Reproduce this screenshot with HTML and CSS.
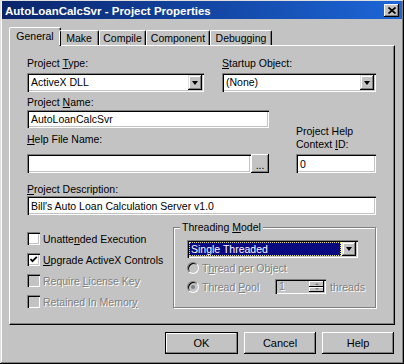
FILE: index.html
```html
<!DOCTYPE html>
<html lang="en">
<head>
	<meta charset="UTF-8">
	<title>AutoLoanCalcSvr - Project Properties</title>
	<link rel="stylesheet" href="styles.css">
</head>
<body>
	<div class="dialog">
		<div class="titlebar">
			<span class="title">AutoLoanCalcSvr - Project Properties</span>
			<a class="closeBtn"><svg width="8" height="7" viewBox="0 0 8 7"><path d="M0.5 0.5 L7.5 6.5 M7.5 0.5 L0.5 6.5" stroke="#000" stroke-width="1.7" fill="none"/></svg></a>
		</div>
		<div class="body">
			<ul class="tabs">
				<li class="cur t_general">General</li>
				<li class="t_make">Make</li>
				<li class="t_compile">Compile</li>
				<li class="t_component">Component</li>
				<li class="t_debug">Debugging</li>
			</ul>
			<div class="panel">
				<div class="topRow">
					<div class="typeField">
						<label>Project <u>T</u>ype:</label>
						<div class="combo"><span class="val">ActiveX DLL</span><i class="drop"></i></div>
					</div>
					<div class="startField">
						<label><u>S</u>tartup Object:</label>
						<div class="combo"><span class="val">(None)</span><i class="drop"></i></div>
					</div>
				</div>
				<div class="nameGrid">
					<label class="nameLbl">Project <u>N</u>ame:</label>
					<div class="edit nameBox">AutoLoanCalcSvr</div>
					<label class="ctxLbl">Project Help<br>Context <u>I</u>D:</label>
					<label class="helpLbl"><u>H</u>elp File Name:</label>
					<div class="helpRow">
						<div class="edit helpBox"></div>
						<a class="btn dots">...</a>
					</div>
					<div class="edit ctxBox">0</div>
				</div>
				<label class="descLbl"><u>P</u>roject Description:</label>
				<div class="edit descBox">Bill's Auto Loan Calculation Server v1.0</div>
				<div class="bottomRow">
					<div class="checks">
						<div class="check"><i class="box"></i><span>Unatte<u>n</u>ded Execution</span></div>
						<div class="check"><i class="box"><svg width="9" height="9" viewBox="0 0 9 9"><path d="M1.5 4 L3.5 6.2 L7.8 1.8" stroke="#000" stroke-width="1.8" fill="none"/></svg></i><span><u>U</u>pgrade ActiveX Controls</span></div>
						<div class="check off"><i class="box"></i><span>Require <u>L</u>icense Key</span></div>
						<div class="check off"><i class="box"></i><span>Retained In Memor<u>y</u></span></div>
					</div>
					<div class="group">
						<span class="caption">Threading <u>M</u>odel</span>
						<div class="combo threadCombo"><span class="val"><b>Single Threaded</b></span><i class="drop"></i></div>
						<div class="radio off"><i class="dot"></i><span class="rlabel">T<u>h</u>read per Object</span></div>
						<div class="radio off sel"><i class="dot"></i><span class="rlabel poolLbl">Thread <u>P</u>ool</span>
							<div class="spin"><span class="num">1</span><span class="arrows"><i class="up"></i><i class="down"></i></span></div>
							<span class="rlabel">threads</span>
						</div>
					</div>
				</div>
			</div>
			<div class="buttons">
				<a class="btn default">OK</a>
				<a class="btn">Cancel</a>
				<a class="btn">Help</a>
			</div>
		</div>
	</div>
</body>
</html>
```

FILE: styles.css
```css
*{
	margin: 0;
	padding: 0;
	box-sizing: border-box;
}
body{
	background-color: #c3c3c3;
	font-family: "Liberation Sans", Arial, sans-serif;
	font-size: 10.5px;
	color: #000;
}
u{
	text-decoration: underline;
	text-underline-offset: 1px;
}
label{
	display: block;
	height: 13px;
	line-height: 13px;
}
.dialog{
	width: 404px;
	height: 364px;
	background-color: #c3c3c3;
	box-shadow: inset -1px -1px 0 #000, inset 1px 1px 0 #dfdfdf, inset -2px -2px 0 #808080, inset 2px 2px 0 #fff;
	padding-top: 1px;
}
.titlebar{
	display: flex;
	align-items: center;
	justify-content: space-between;
	height: 18px;
	margin: 0 2px 0 2px;
	padding: 0 3px 0 3px;
	background: linear-gradient(to right, #0a246a, #1c66d8);
}
.titlebar .title{
	color: #fff;
	font-weight: bold;
	font-size: 11.5px;
	padding-top: 1px;
}
.closeBtn{
	display: flex;
	align-items: center;
	justify-content: center;
	width: 15px;
	height: 13px;
	background-color: #c3c3c3;
	box-shadow: inset -1px -1px 0 #000, inset 1px 1px 0 #fff, inset -2px -2px 0 #808080;
}
.body{
	padding: 8px 9px 0 9px;
}
/* tabs */
.tabs{
	list-style: none;
	display: flex;
	align-items: flex-end;
	height: 18px;
	padding-left: 2px;
	position: relative;
	z-index: 2;
}
.tabs li{
	height: 15px;
	line-height: 14px;
	text-align: center;
	border-top: 1px solid #fff;
	border-left: 1px solid #fff;
	border-right: 1px solid #000;
	box-shadow: inset -1px 0 0 #808080;
	border-radius: 2px 2px 0 0;
}
.tabs li.cur{
	height: 19px;
	margin: 0 -2px -1px -2px;
	background-color: #c3c3c3;
	line-height: 16px;
}
.t_general{ width: 48px; }
.tabs li.t_general{ width: 52px; }
.t_make{ width: 40px; }
.t_compile{ width: 47px; }
.t_component{ width: 64px; }
.t_debug{ width: 62px; }
/* panel */
.panel{
	width: 386px;
	height: 280px;
	border: 1px solid;
	border-color: #fff #000 #000 #fff;
	box-shadow: inset -1px -1px 0 #808080;
	padding: 11px 0 0 17px;
}
.topRow{
	display: flex;
}
.topRow label{
	margin-bottom: 3px;
}
.typeField{
	width: 177px;
}
.startField{
	width: 154px;
	margin-left: 18px;
}
.combo, .edit, .spin{
	display: flex;
	align-items: center;
	height: 19px;
	background-color: #fff;
	box-shadow: inset 1px 1px 0 #808080, inset 2px 2px 0 #000, inset -1px -1px 0 #fff, inset -2px -2px 0 #c3c3c3;
	padding: 2px;
	white-space: nowrap;
}
.combo .val{
	flex: 1;
	padding-left: 2px;
	line-height: 15px;
}
.edit{
	padding-left: 4px;
}
.drop{
	display: flex;
	align-items: center;
	justify-content: center;
	width: 14px;
	height: 15px;
	background-color: #c3c3c3;
	box-shadow: inset -1px -1px 0 #000, inset 1px 1px 0 #dfdfdf, inset -2px -2px 0 #808080, inset 2px 2px 0 #fff;
}
.drop::after{
	content: '';
	border-left: 3.5px solid transparent;
	border-right: 3.5px solid transparent;
	border-top: 4px solid #000;
}
.nameGrid{
	display: grid;
	grid-template-columns: 242px 80px;
	grid-template-rows: 13px 19px 26px 19px;
	column-gap: 27px;
	margin-top: 4px;
}
.nameLbl{
	grid-column: 1;
	grid-row: 1;
}
.nameBox{
	grid-column: 1;
	grid-row: 2;
	height: 18px;
	margin-top: 1px;
}
.ctxLbl{
	grid-column: 2;
	grid-row: 2 / 4;
	align-self: end;
	height: 26px;
	margin-bottom: 3px;
}
.helpLbl{
	grid-column: 1;
	grid-row: 3;
	margin-top: 5px;
}
.helpRow{
	grid-column: 1;
	grid-row: 4;
	display: flex;
}
.helpBox{
	width: 225px;
}
.ctxBox{
	grid-column: 2;
	grid-row: 4;
}
.btn{
	display: flex;
	align-items: center;
	justify-content: center;
	background-color: #c3c3c3;
	box-shadow: inset -1px -1px 0 #000, inset 1px 1px 0 #fff, inset -2px -2px 0 #808080;
	cursor: pointer;
}
.dots{
	width: 18px;
	height: 19px;
	padding-top: 3px;
}
.descLbl{
	margin-top: 10px;
}
.descBox{
	width: 349px;
}
/* checks + threading group */
.bottomRow{
	display: flex;
}
.checks{
	width: 146px;
	padding-top: 17px;
	display: flex;
	flex-direction: column;
	gap: 8px;
}
.check{
	display: flex;
	align-items: center;
	height: 13px;
	white-space: nowrap;
}
.box{
	display: flex;
	align-items: center;
	justify-content: center;
	width: 13px;
	height: 13px;
	margin-right: 3px;
	background-color: #fff;
	box-shadow: inset 1px 1px 0 #808080, inset 2px 2px 0 #000, inset -1px -1px 0 #fff, inset -2px -2px 0 #c3c3c3;
}
.off{
	color: #808080;
	text-shadow: 1px 1px 0 #fff;
}
.off .box, .off .dot{
	background-color: #c3c3c3;
}
.group{
	position: relative;
	width: 203px;
	margin-top: 12px;
	border: 1px solid #808080;
	box-shadow: inset 1px 1px 0 #fff, 1px 1px 0 #fff;
	padding: 12px 0 10px 13px;
}
.group .caption{
	position: absolute;
	top: -7px;
	left: 6px;
	padding: 0 2px;
	line-height: 13px;
	background-color: #c3c3c3;
}
.threadCombo{
	width: 171px;
	height: 18px;
}
.threadCombo .val{
	height: 14px;
	margin-right: 1px;
	background-color: #0a0a80;
	color: #fff;
	outline: 1px dotted #e0e070;
	outline-offset: -1px;
	line-height: 14px;
}
.threadCombo .val b{
	font-weight: normal;
}
.threadCombo .drop{
	height: 14px;
}
.radio{
	display: flex;
	align-items: center;
	height: 19px;
	white-space: nowrap;
}
.dot{
	display: flex;
	align-items: center;
	justify-content: center;
	width: 12px;
	height: 12px;
	border-radius: 50%;
	margin-right: 3px;
	border: 1px solid;
	border-color: #808080 #fff #fff #808080;
	box-shadow: inset 1px 1px 0 #000;
}
.sel .dot::after{
	content: '';
	width: 4px;
	height: 4px;
	border-radius: 50%;
	background-color: #808080;
}
.poolLbl{
	width: 73px;
}
.spin{
	width: 51px;
	height: 15px;
	background-color: #c3c3c3;
	color: #808080;
	padding: 2px 2px 2px 4px;
}
.spin .num{
	flex: 1;
	line-height: 11px;
}
.arrows{
	display: flex;
	flex-direction: column;
	width: 15px;
	height: 11px;
}
.arrows i{
	flex: 1;
	display: flex;
	align-items: center;
	justify-content: center;
	box-shadow: inset -1px -1px 0 #000, inset 1px 1px 0 #fff;
}
.arrows .up::after{
	content: '';
	border-left: 2.5px solid transparent;
	border-right: 2.5px solid transparent;
	border-bottom: 2.5px solid #808080;
}
.arrows .down::after{
	content: '';
	border-left: 2.5px solid transparent;
	border-right: 2.5px solid transparent;
	border-top: 2.5px solid #808080;
}
.spin + .rlabel{
	margin-left: 4px;
}
/* dialog buttons */
.buttons{
	display: flex;
	justify-content: flex-end;
	gap: 6px;
	margin-top: 7px;
	margin-right: 1px;
}
.buttons .btn{
	width: 72px;
	height: 22px;
	font-size: 11px;
}
.buttons .default{
	width: 73px;
	border: 1px solid #000;
	box-shadow: inset -1px -1px 0 #808080, inset 1px 1px 0 #fff;
}
```
